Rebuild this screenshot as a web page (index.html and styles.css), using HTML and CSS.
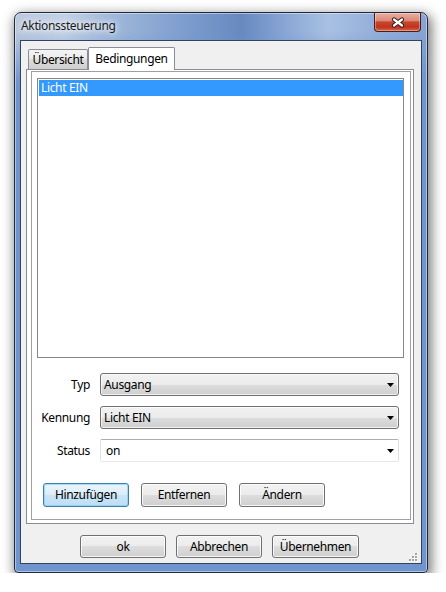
FILE: index.html
```html
<!DOCTYPE html>
<html lang="de">
<head>
<meta charset="utf-8">
<title>Aktionssteuerung</title>
<link rel="stylesheet" href="styles.css">
</head>
<body>
<div class="window">
  <div class="titlebar">
    <span class="title">Aktionssteuerung</span>
    <div class="close">
      <svg width="14" height="11" viewBox="0 0 14 11">
        <path d="M3 2.5 L11 8.5 M11 2.5 L3 8.5" stroke="#3a1a14" stroke-width="4.2" stroke-linecap="round"/>
        <path d="M3 2.5 L11 8.5 M11 2.5 L3 8.5" stroke="#ffffff" stroke-width="2.2" stroke-linecap="round"/>
      </svg>
    </div>
  </div>
  <div class="client">
    <div class="tabs">
      <div class="tab">Übersicht</div>
      <div class="tab active">Bedingungen</div>
    </div>
    <div class="tabpage">
      <div class="frame">
        <div class="listbox">
          <div class="item selected">Licht EIN</div>
        </div>
        <div class="form">
          <label class="label">Typ</label>
          <div class="combo list"><span class="value">Ausgang</span><svg class="arrow" width="7" height="4" viewBox="0 0 7 4"><path d="M0 0 H7 L3.5 4 Z" fill="#000"/></svg></div>
          <label class="label">Kennung</label>
          <div class="combo list"><span class="value">Licht EIN</span><svg class="arrow" width="7" height="4" viewBox="0 0 7 4"><path d="M0 0 H7 L3.5 4 Z" fill="#000"/></svg></div>
          <label class="label">Status</label>
          <div class="combo edit"><span class="value">on</span><svg class="arrow" width="7" height="4" viewBox="0 0 7 4"><path d="M0 0 H7 L3.5 4 Z" fill="#000"/></svg></div>
        </div>
        <div class="actions">
          <button class="btn default">Hinzufügen</button>
          <button class="btn">Entfernen</button>
          <button class="btn">Ändern</button>
        </div>
      </div>
    </div>
    <div class="footer">
      <button class="btn">ok</button>
      <button class="btn">Abbrechen</button>
      <button class="btn wide">Übernehmen</button>
    </div>
    <svg class="grip" width="9" height="9" viewBox="0 0 9 9">
      <g fill="#ffffff">
        <rect x="7" y="1" width="2" height="2"/>
        <rect x="4" y="4" width="2" height="2"/><rect x="7" y="4" width="2" height="2"/>
        <rect x="1" y="7" width="2" height="2"/><rect x="4" y="7" width="2" height="2"/><rect x="7" y="7" width="2" height="2"/>
      </g>
      <g fill="#a3a3a3">
        <rect x="6" y="0" width="2" height="2"/>
        <rect x="3" y="3" width="2" height="2"/><rect x="6" y="3" width="2" height="2"/>
        <rect x="0" y="6" width="2" height="2"/><rect x="3" y="6" width="2" height="2"/><rect x="6" y="6" width="2" height="2"/>
      </g>
    </svg>
  </div>
</div>
</body>
</html>
```
FILE: styles.css
```css
* { box-sizing: border-box; }

body {
  margin: 0;
  background: #ffffff;
  font-family: "Noto Sans", "Open Sans", sans-serif;
  font-size: 12px;
  letter-spacing: -0.35px;
  color: #000;
}

.window {
  margin: 12px 0 0 14px;
  width: 414px;
  height: 561px;
  border: 1px solid #1e2a3c;
  border-radius: 7px 7px 4px 4px;
  padding: 0 5px 8px;
  display: flex;
  flex-direction: column;
  background:
    linear-gradient(180deg, rgba(112,148,206,0) 18px, rgba(112,148,206,1) 70px),
    linear-gradient(90deg, #b9c8de 0%, #c3d1e6 12%, #9fb7d9 24%, #7f9fce 40%, #6789c0 55%, #8aa7d5 66%, #a9c0e2 76%, #93aed9 88%, #86a3d3 100%);
  box-shadow: 2px 4px 12px 2px rgba(0,0,0,0.5), inset 0 0 0 1px rgba(255,255,255,0.45);
}

.titlebar {
  height: 27px;
  display: flex;
  align-items: flex-start;
}

.title {
  padding: 5px 0 0 1px;
  line-height: 16px;
  color: #1a1a1a;
  text-shadow: 0 0 8px #ffffff, 0 0 5px rgba(255,255,255,0.9);
}

.close {
  margin-left: auto;
  margin-right: 1px;
  width: 47px;
  height: 19px;
  border: 1px solid #4a1d16;
  border-top: none;
  border-radius: 0 0 4px 4px;
  background: linear-gradient(180deg, #e9b0a2 0%, #dc8a78 42%, #c8472f 50%, #c0331c 78%, #d5684a 100%);
  box-shadow: inset 0 0 0 1px rgba(255,255,255,0.35);
  display: flex;
  align-items: center;
  justify-content: center;
}

.client {
  flex: 1;
  border: 1px solid #33435c;
  background: #f0f0f0;
  display: flex;
  flex-direction: column;
  position: relative;
}

.tabs {
  display: flex;
  align-items: flex-end;
  height: 22px;
  margin: 6px 0 0 5px;
  padding-left: 2px;
  position: relative;
  z-index: 1;
}

.tab {
  width: 60px;
  height: 20px;
  padding-top: 1px;
  border: 1px solid #898c95;
  border-bottom: none;
  border-radius: 2px 2px 0 0;
  background: linear-gradient(180deg, #f3f3f3 0%, #ebebeb 50%, #dddddd 50%, #cfcfcf 100%);
  display: flex;
  align-items: center;
  justify-content: center;
  line-height: 16px;
  white-space: nowrap;
}

.tab.active {
  width: 87px;
  height: 23px;
  padding-top: 0;
  margin-bottom: -1px;
  background: #ffffff;
}

.tabpage {
  height: 455px;
  margin: 0 7px 0 5px;
  border: 1px solid #898c95;
  background: #ffffff;
  padding: 1px 2px 3px 4px;
  display: flex;
}

.frame {
  flex: 1;
  border: 1px solid #a0a0a0;
  display: flex;
  flex-direction: column;
}

.listbox {
  margin: 6px 6px 0 5px;
  height: 280px;
  border: 1px solid #828790;
  background: #ffffff;
  padding: 1px 0 0 1px;
}

.item {
  height: 16px;
  line-height: 16px;
  padding-left: 2px;
}

.item.selected {
  background: #3399ff;
  color: #ffffff;
}

.form {
  display: grid;
  grid-template-columns: 58px 299px;
  grid-auto-rows: 23px;
  gap: 10px;
  margin-top: 15px;
  align-items: center;
}

.label {
  text-align: right;
  line-height: 16px;
}

.combo {
  height: 23px;
  display: flex;
  align-items: center;
  padding: 0 4px 0 3px;
  border-radius: 3px;
}

.combo .value {
  flex: 1;
  line-height: 16px;
}

.combo.list {
  border: 1px solid #707070;
  background: linear-gradient(180deg, #f2f2f2 0%, #ebebeb 50%, #dddddd 50%, #cfcfcf 100%);
  box-shadow: inset 0 0 0 1px rgba(255,255,255,0.7);
}

.combo.edit {
  border: 1px solid;
  border-color: #abadb3 #dbdfe6 #e3e9ef #e2e3ea;
  border-radius: 2px;
  background: #ffffff;
  padding-left: 5px;
}

.arrow {
  display: block;
}

.actions {
  display: flex;
  gap: 12px;
  margin-top: 21px;
  padding-left: 11px;
}

.btn {
  width: 86px;
  height: 24px;
  padding: 0;
  border: 1px solid #707070;
  border-radius: 3px;
  background: linear-gradient(180deg, #f2f2f2 0%, #ebebeb 50%, #dddddd 50%, #cfcfcf 100%);
  box-shadow: inset 0 0 0 1px rgba(255,255,255,0.8);
  font: inherit;
  letter-spacing: inherit;
  color: #000;
  line-height: 16px;
}

.btn.default {
  border-color: #3c7fb1;
  background: linear-gradient(180deg, #eaf5fc 0%, #dcedf9 50%, #cbe5f7 50%, #bedcf3 100%);
  box-shadow: inset 0 0 0 1px rgba(120,200,245,0.6);
}

.footer {
  flex: 1;
  display: flex;
  align-items: flex-start;
  gap: 10px;
  padding: 11px 0 0 59px;
}

.footer .btn {
  height: 23px;
}

.footer .btn.wide {
  width: 87px;
}

.grip {
  position: absolute;
  right: 3px;
  bottom: 1px;
}
```
